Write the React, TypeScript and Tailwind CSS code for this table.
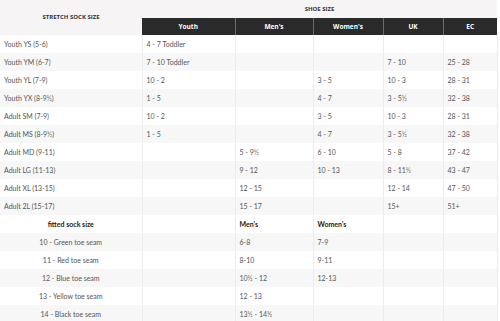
import React from 'react';

const shoeRows = [
  ['Youth YS (5-6)', '4 - 7 Toddler', '', '', '', ''],
  ['Youth YM (6-7)', '7 - 10 Toddler', '', '', '7 - 10', '25 - 28'],
  ['Youth YL (7-9)', '10 - 2', '', '3 - 5', '10 - 3', '28 - 31'],
  ['Youth YX (8-9½)', '1 - 5', '', '4 - 7', '3 - 5½', '32 - 38'],
  ['Adult SM (7-9)', '10 - 2', '', '3 - 5', '10 - 3', '28 - 31'],
  ['Adult MS (8-9½)', '1 - 5', '', '4 - 7', '3 - 5½', '32 - 38'],
  ['Adult MD (9-11)', '', '5 - 9½', '6 - 10', '5 - 8', '37 - 42'],
  ['Adult LG (11-13)', '', '9 - 12', '10 - 13', '8 - 11½', '43 - 47'],
  ['Adult XL (13-15)', '', '12 - 15', '', '12 - 14', '47 - 50'],
  ['Adult 2L (15-17)', '', '15 - 17', '', '15+', '51+'],
];

const fittedRows = [
  ['10 - Green toe seam', '6-8', ' 7-9'],
  ['11 - Red toe seam', '8-10', '9-11'],
  ['12 - Blue toe seam', '10½ - 12', '12-13'],
  ['13 - Yellow toe seam', '12 - 13', ''],
  ['14 - Black toe seam', '13½ - 14½', ''],
];

const heads = ['Youth', "Men's", "Women's", 'UK', 'EC'];

const cell = 'h-[18px] px-1 border-r border-[#ececec] whitespace-nowrap';

const App = () => {
  return (
    <div className="w-[500px] h-[321px] bg-white overflow-hidden font-['Lato',sans-serif] text-[7px] text-[#555]">
      <table className="w-[497px] table-fixed border-collapse">
        <colgroup>
          <col className="w-[142px]" />
          <col className="w-[93px]" />
          <col className="w-[78px]" />
          <col className="w-[70px]" />
          <col className="w-[60px]" />
          <col className="w-[54px]" />
        </colgroup>
        <thead>
          <tr className="bg-[#f6f4f4]">
            <th
              rowSpan={2}
              className="h-[35px] text-center font-['Open_Sans',sans-serif] font-bold text-[6px] text-[#333] uppercase"
            >
              STRETCH SOCK SIZE
            </th>
            <th
              colSpan={5}
              className="h-[18px] text-center font-['Open_Sans',sans-serif] font-bold text-[6px] text-[#333] uppercase"
            >
              SHOE SIZE
            </th>
          </tr>
          <tr className="bg-[#2a2a2a]">
            {heads.map((h, i) => (
              <th
                key={h}
                className={`h-[17px] text-center font-['Open_Sans',sans-serif] font-bold text-[6.5px] text-white ${
                  i < heads.length - 1 ? 'border-r border-[#6a6a6a]' : ''
                }`}
              >
                {h}
              </th>
            ))}
          </tr>
        </thead>
        <tbody>
          {shoeRows.map((row, r) => (
            <tr key={r} className={r % 2 === 0 ? 'bg-white' : 'bg-[#f7f7f7]'}>
              {row.map((c, i) => (
                <td key={i} className={cell}>
                  {c}
                </td>
              ))}
            </tr>
          ))}
          <tr className="bg-white font-bold text-[#222]">
            <td className={`${cell} text-center`}>fitted sock size</td>
            <td className={cell}></td>
            <td className={cell}>Men's</td>
            <td className={cell}>Women's</td>
            <td className={cell}></td>
            <td className={cell}></td>
          </tr>
          {fittedRows.map((row, r) => (
            <tr key={r} className={r % 2 === 0 ? 'bg-[#f7f7f7]' : 'bg-white'}>
              <td className={`${cell} text-center`}>{row[0]}</td>
              <td className={cell}></td>
              <td className={cell}>{row[1]}</td>
              <td className={cell}>{row[2]}</td>
              <td className={cell}></td>
              <td className={cell}></td>
            </tr>
          ))}
        </tbody>
      </table>
    </div>
  );
};

export default App;
